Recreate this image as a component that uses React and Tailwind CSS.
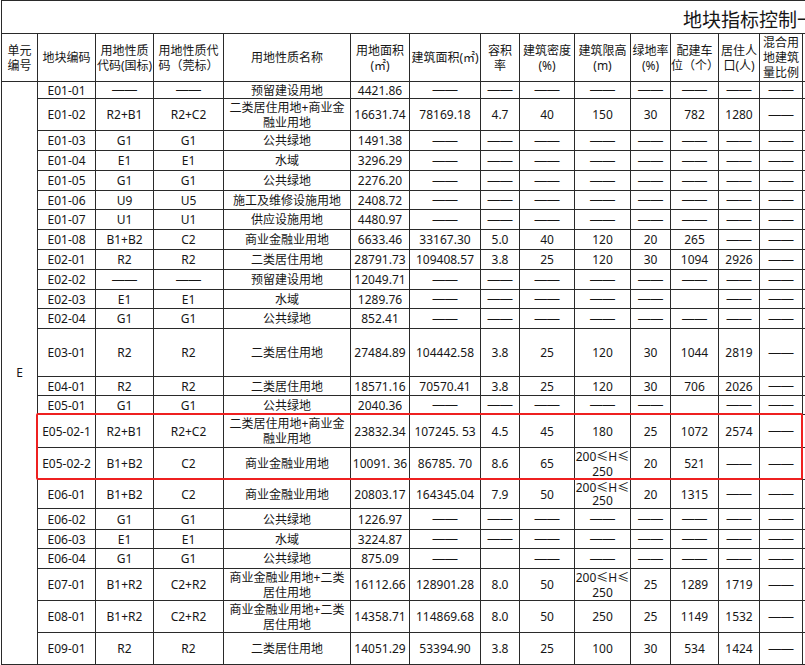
import React from "react";

const D = "——";

const rows = [
  { h: "h-[16px]", c: ["E01-01", D, D, "预留建设用地", "4421.86", D, D, D, D, D, D, D, D] },
  { h: "h-[32px]", c: ["E01-02", "R2+B1", "R2+C2", "二类居住用地+商业金\n融业用地", "16631.74", "78169.18", "4.7", "40", "150", "30", "782", "1280", D] },
  { h: "h-[20px]", c: ["E01-03", "G1", "G1", "公共绿地", "1491.38", D, D, D, D, D, D, D, D] },
  { h: "h-[20px]", c: ["E01-04", "E1", "E1", "水域", "3296.29", D, D, D, D, D, D, D, D] },
  { h: "h-[20px]", c: ["E01-05", "G1", "G1", "公共绿地", "2276.20", D, D, D, D, D, D, D, D] },
  { h: "h-[19px]", c: ["E01-06", "U9", "U5", "施工及维修设施用地", "2408.72", D, D, D, D, D, D, D, D] },
  { h: "h-[20px]", c: ["E01-07", "U1", "U1", "供应设施用地", "4480.97", D, D, D, D, D, D, D, D] },
  { h: "h-[20px]", c: ["E01-08", "B1+B2", "C2", "商业金融业用地", "6633.46", "33167.30", "5.0", "40", "120", "20", "265", D, D] },
  { h: "h-[20px]", c: ["E02-01", "R2", "R2", "二类居住用地", "28791.73", "109408.57", "3.8", "25", "120", "30", "1094", "2926", D] },
  { h: "h-[20px]", c: ["E02-02", D, D, "预留建设用地", "12049.71", D, D, D, D, D, D, D, D] },
  { h: "h-[19px]", c: ["E02-03", "E1", "E1", "水域", "1289.76", D, D, D, D, D, "", D, D] },
  { h: "h-[20px]", c: ["E02-04", "G1", "G1", "公共绿地", "852.41", D, D, D, D, D, D, D, D] },
  { h: "h-[48px]", c: ["E03-01", "R2", "R2", "二类居住用地", "27484.89", "104442.58", "3.8", "25", "120", "30", "1044", "2819", D] },
  { h: "h-[19px]", c: ["E04-01", "R2", "R2", "二类居住用地", "18571.16", "70570.41", "3.8", "25", "120", "30", "706", "2026", D] },
  { h: "h-[19px]", c: ["E05-01", "G1", "G1", "公共绿地", "2040.36", D, D, D, D, D, "", D, D] },
  { h: "h-[33px]", c: ["E05-02-1", "R2+B1", "R2+C2", "二类居住用地+商业金\n融业用地", "23832.34", "107245. 53", "4.5", "45", "180", "25", "1072", "2574", D] },
  { h: "h-[32px]", c: ["E05-02-2", "B1+B2", "C2", "商业金融业用地", "10091. 36", "86785. 70", "8.6", "65", "200≤H≤\n250", "20", "521", D, D] },
  { h: "h-[29px]", c: ["E06-01", "B1+B2", "C2", "商业金融业用地", "20803.17", "164345.04", "7.9", "50", "200≤H≤\n250", "20", "1315", D, D] },
  { h: "h-[21px]", c: ["E06-02", "G1", "G1", "公共绿地", "1226.97", D, D, D, D, D, D, D, D] },
  { h: "h-[19px]", c: ["E06-03", "E1", "E1", "水域", "3224.87", D, D, D, D, D, D, D, D] },
  { h: "h-[20px]", c: ["E06-04", "G1", "G1", "公共绿地", "875.09", D, "", D, D, D, D, D, D] },
  { h: "h-[32px]", c: ["E07-01", "B1+R2", "C2+R2", "商业金融业用地+二类\n居住用地", "16112.66", "128901.28", "8.0", "50", "200≤H≤\n250", "25", "1289", "1719", D] },
  { h: "h-[32px]", c: ["E08-01", "B1+R2", "C2+R2", "商业金融业用地+二类\n居住用地", "14358.71", "114869.68", "8.0", "50", "250", "25", "1149", "1532", D] },
  { h: "h-[32px]", c: ["E09-01", "R2", "R2", "二类居住用地", "14051.29", "53394.90", "3.8", "25", "100", "30", "534", "1424", D] },
];

const headers = [
  "单元\n编号",
  "地块编码",
  "用地性质\n代码(国标)",
  "用地性质代\n码（莞标）",
  "用地性质名称",
  "用地面积\n(㎡)",
  "建筑面积(㎡)",
  "容积\n率",
  "建筑密度\n(%)",
  "建筑限高\n(m)",
  "绿地率\n(%)",
  "配建车\n位（个）",
  "居住人\n口(人)",
  "混合用\n地建筑\n量比例",
  "",
];

const cell =
  "border-r border-b border-[#2a2a2a] p-0 text-center align-middle whitespace-pre-line";

export default function App() {
  return (
    <div className="relative w-[805px] h-[665px] overflow-hidden bg-white pl-[1px] text-[#161616] font-['Noto_Sans','Noto_Sans_CJK_SC',sans-serif] text-[12px]">
      <table className="table-fixed border-separate border-spacing-0 border-l border-t border-[#2a2a2a] w-[905px]">
        <colgroup>
          <col className="w-[36px]" />
          <col className="w-[58px]" />
          <col className="w-[58px]" />
          <col className="w-[70px]" />
          <col className="w-[127px]" />
          <col className="w-[59px]" />
          <col className="w-[71px]" />
          <col className="w-[39px]" />
          <col className="w-[55px]" />
          <col className="w-[56px]" />
          <col className="w-[40px]" />
          <col className="w-[48px]" />
          <col className="w-[41px]" />
          <col className="w-[43px]" />
          <col className="w-[104px]" />
        </colgroup>
        <tbody>
          <tr className="h-[33px]">
            <td colSpan={15} className="border-r border-b border-[#2a2a2a] p-0 align-middle">
              <div className="pl-[681px] pt-[3px] whitespace-nowrap text-[19px] leading-[26px] font-['Noto_Sans_CJK_SC',sans-serif]">
                地块指标控制一览表
              </div>
            </td>
          </tr>
          <tr className="h-[48px]">
            {headers.map((t, i) => (
              <td key={i} className={`${cell} leading-[15px]`}>
                {t}
              </td>
            ))}
          </tr>
          {rows.map((r, ri) => (
            <tr key={ri} className={r.h}>
              {ri === 0 && (
                <td rowSpan={rows.length} className={cell}>
                  E
                </td>
              )}
              {r.c.map((t, ci) => (
                <td
                  key={ci}
                  className={`${cell} ${ri === 17 ? "leading-[13px]" : "leading-[15px]"}`}
                >
                  {t === D ? (
                    <span className="font-['Liberation_Sans',sans-serif] text-[12.5px]">{D}</span>
                  ) : (
                    t
                  )}
                </td>
              ))}
              <td className={cell}></td>
            </tr>
          ))}
          <tr className="h-[20px]">
            <td colSpan={15} className="border-r border-b border-[#2a2a2a] p-0"></td>
          </tr>
        </tbody>
      </table>
      <div className="absolute left-[36px] top-[413px] w-[767px] h-[67px] border-2 border-[#ee2020] rounded-[2px] pointer-events-none"></div>
    </div>
  );
}
